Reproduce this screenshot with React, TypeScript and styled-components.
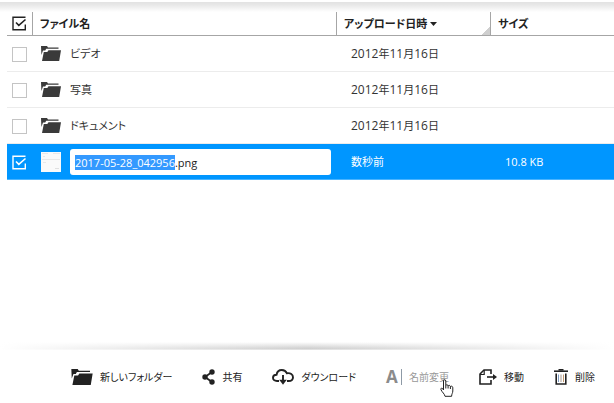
import { useEffect, useRef, useState } from "react";
import type { ReactNode } from "react";
import styled, { createGlobalStyle } from "styled-components";

const GlobalStyle = createGlobalStyle`
  *, *::before, *::after { box-sizing: border-box; }
  body {
    margin: 0;
    background: #fff;
    color: #333;
    font: 11px/16px "Open Sans", "Noto Sans CJK JP", sans-serif;
    font-feature-settings: "palt";
  }
`;

const Page = styled.div`
  min-height: 100vh;
  display: flex;
  flex-direction: column;
`;

const TopShade = styled.div`
  height: 10px;
  margin-top: 2px;
  background: linear-gradient(#e2e2e2, #e8e8e8 30%, #fff);
`;

const Main = styled.main`
  flex: 1;
  padding-left: 7px;
`;

const FileTable = styled.table`
  width: 100%;
  table-layout: fixed;
  border-collapse: separate;
  border-spacing: 0;
`;

const HeadCell = styled.th<{ $width?: number; $divider?: boolean; $resizable?: boolean }>`
  width: ${(p) => (p.$width ? `${p.$width}px` : "auto")};
  height: 24px;
  padding: 0 0 0 ${(p) => (p.$divider ? 7 : 5)}px;
  border-bottom: 1px solid #a6a6a6;
  border-left: ${(p) => (p.$divider ? "1px solid #a6a6a6" : "none")};
  background: ${(p) =>
    p.$resizable
      ? "linear-gradient(135deg, transparent 50%, #cfcfcf 50%) right bottom / 8px 8px no-repeat"
      : "none"};
  text-align: left;
  vertical-align: middle;
  font-weight: 600;
  color: #222;
  white-space: nowrap;
`;

const SortButton = styled.button`
  display: flex;
  align-items: center;
  gap: 3px;
  padding: 0;
  border: 0;
  background: none;
  color: inherit;
  font: inherit;
  font-feature-settings: inherit;
`;

const Row = styled.tr<{ $selected: boolean }>`
  height: 36px;
  background: ${(p) => (p.$selected ? "#0096ff" : "#fff")};
  color: ${(p) => (p.$selected ? "#fff" : "#333")};
  td { border-bottom: 1px solid ${(p) => (p.$selected ? "#4ab4ff" : "#ececec")}; }
`;

const Cell = styled.td<{ $indent: number }>`
  height: 36px;
  padding: 0 0 0 ${(p) => p.$indent}px;
  vertical-align: middle;
  white-space: nowrap;
`;

const CheckCell = styled(Cell)`
  padding-top: 2px;
`;

const SizeCell = styled(Cell)`
  font-weight: 500;
`;

const Digits = styled.span`
  font-size: 12px;
`;

const NameLayout = styled.div`
  display: flex;
  align-items: center;
  gap: 9px;
  padding-right: 5px;
`;

const CheckLabel = styled.label`
  position: relative;
  display: block;
  width: 15px;
  height: 15px;
  svg { display: block; }
`;

const CheckInput = styled.input`
  position: absolute;
  inset: 0;
  width: 100%;
  height: 100%;
  margin: 0;
  opacity: 0;
`;

const RenameInput = styled.input`
  flex: 1;
  min-width: 0;
  height: 26px;
  padding: 2px 5px 0;
  border: 0;
  border-radius: 3px;
  outline: 0;
  background: #fff;
  color: #222;
  font: inherit;
  font-weight: 500;
  &::selection { background: #3399ff; color: #fff; }
`;

const FooterShade = styled.div`
  height: 8px;
  background:
    linear-gradient(90deg, #fff, rgba(255, 255, 255, 0) 50%, #fff),
    linear-gradient(#fff, #cfcfcf 80%, #e8e8e8);
`;

const Toolbar = styled.footer`
  display: flex;
  justify-content: flex-end;
  align-items: center;
  gap: 30px;
  height: 53px;
  padding-right: 19px;
`;

const ToolButton = styled.button<{ $muted?: boolean }>`
  position: relative;
  display: flex;
  align-items: center;
  gap: 7px;
  padding: 0;
  border: 0;
  background: none;
  color: ${(p) => (p.$muted ? "#999" : "#222")};
  font: inherit;
  font-size: 10px;
  font-feature-settings: inherit;
  white-space: nowrap;
  svg { flex: none; }
`;

const Pointer = styled.svg`
  position: absolute;
  right: -5px;
  top: 10px;
`;

function CheckBox({ label, initial, color }: { label: string; initial: boolean; color: string }) {
  const [checked, setChecked] = useState(initial);
  return (
    <CheckLabel>
      <CheckInput
        type="checkbox"
        aria-label={label}
        checked={checked}
        onChange={(e) => setChecked(e.target.checked)}
      />
      {checked ? (
        <svg width="15" height="15" viewBox="0 0 15 15" fill="none" stroke={color} strokeWidth="1.4">
          <path d="M13.5 1.2H1V13.8H13.3V8.5" />
          <path d="M4 6.5L6.8 9.3L13.5 3.5" strokeWidth="1.6" />
        </svg>
      ) : (
        <svg width="15" height="15" viewBox="0 0 15 15" fill="#fff" stroke="#c4c4c4">
          <rect x="0.5" y="0.5" width="14" height="14" />
        </svg>
      )}
    </CheckLabel>
  );
}

function FolderIcon({ width, height, color }: { width: number; height: number; color: string }) {
  return (
    <svg width={width} height={height} viewBox="0 0 20 15" fill={color}>
      <path d="M0 0H6L7 1.6H17.5V2.8H5.2L4.2 4.6H2L0.4 9Z" />
      <path d="M7.5 4.2H20L18.2 15H1L2.8 6H6.3Z" />
    </svg>
  );
}

function Thumbnail() {
  return (
    <svg width="20" height="20" viewBox="0 0 20 20">
      <rect width="20" height="20" fill="#fafafa" />
      <path d="M1 1.5H7M12 1.5H19M2 4.5H4M1 7.5H19M2 10.5H5" stroke="#e8e8e8" />
      <path d="M14 16.5H18" stroke="#e0e0e0" />
    </svg>
  );
}

function ShareIcon() {
  return (
    <svg width="13" height="16" viewBox="0 0 13 16" fill="#222">
      <path d="M10 3L3 8L10 13" fill="none" stroke="#222" strokeWidth="1.8" />
      <circle cx="10" cy="3" r="2.7" />
      <circle cx="3" cy="8" r="2.7" />
      <circle cx="10" cy="13" r="2.7" />
    </svg>
  );
}

function CloudIcon() {
  return (
    <svg width="22" height="16" viewBox="0 0 22 16" fill="none" stroke="#222" strokeWidth="1.9">
      <path d="M7 12H5C2.5 12 1 10.7 1 8.8C1 6.8 2.5 5.8 4.6 5.7C5 2.8 7 1 9.8 1C12.3 1 14 2.2 14.8 4.2C18.5 3.6 21 5.4 21 8.2C21 10.6 19.2 12 16.5 12H15" />
      <path d="M11 6V12" />
      <path d="M7.2 10.8H14.8L11 15.8Z" fill="#222" stroke="none" />
    </svg>
  );
}

const RenameGlyph = styled.span`
  display: flex;
  align-items: center;
  width: 16px;
  height: 16px;
  border-right: 1px solid #8e9aa6;
  color: #8b8b8b;
  font: 700 17px/16px "Open Sans", sans-serif;
`;

function MoveIcon() {
  return (
    <svg width="18" height="16" viewBox="0 0 18 16" fill="none" stroke="#222" strokeWidth="1.6">
      <path d="M12 5V1H5L1 5V15H12V11" />
      <path d="M1 5.5H5.2V1" strokeWidth="1.2" />
      <path d="M8 8H15" />
      <path d="M14 5L18 8L14 11Z" fill="#222" stroke="none" />
    </svg>
  );
}

function TrashIcon() {
  return (
    <svg width="14" height="16" viewBox="0 0 14 16" fill="none" stroke="#222">
      <path d="M0 2.2H14" strokeWidth="1.6" />
      <path d="M4.5 0.8H9.5" strokeWidth="1.6" />
      <path d="M2.2 4.5V15H11.8V4.5" strokeWidth="1.6" />
      <path d="M4.5 5.5V13" stroke="#7f9cc0" />
      <path d="M7 5.5V13" stroke="#a89a90" />
      <path d="M9.5 5.5V13" stroke="#c39a72" />
    </svg>
  );
}

function HandPointer() {
  return (
    <Pointer width="14" height="18" viewBox="0 0 14 18" fill="#fff" stroke="#222" strokeLinejoin="round">
      <path d="M3.5 11V2C3.5 .3 5.8 .3 5.8 2V6.5C6.2 5.3 8 5.5 8.1 7C8.6 5.9 10.2 6.2 10.4 7.6C11.2 6.7 12.8 7.2 12.8 8.7V12C12.8 14 11.6 15 11.6 17.3H5C4.6 14.8 2.2 13.3 1 10.8C.3 9.2 2 8.5 2.8 9.8Z" />
      <path d="M5.8 6.5V9.5M8.1 7V9.5M10.4 7.6V10" />
    </Pointer>
  );
}

function DateText({ value }: { value: string }) {
  return value
    .split(/(\d+)/)
    .filter(Boolean)
    .map((part, i) => (/\d/.test(part) ? <Digits key={i}>{part}</Digits> : part));
}

function RenameField({ label, initial }: { label: string; initial: string }) {
  const field = useRef<HTMLInputElement>(null);
  const [value, setValue] = useState(initial);
  useEffect(() => {
    field.current?.focus();
    field.current?.setSelectionRange(0, initial.lastIndexOf("."));
  }, [initial]);
  return (
    <RenameInput
      ref={field}
      type="text"
      aria-label={label}
      spellCheck={false}
      value={value}
      onChange={(e) => setValue(e.target.value)}
    />
  );
}

type FileItem = { name: string; date: string; size: string; editing: boolean };

const files: FileItem[] = [
  { name: "ビデオ", date: "2012年11月16日", size: "", editing: false },
  { name: "写真", date: "2012年11月16日", size: "", editing: false },
  { name: "ドキュメント", date: "2012年11月16日", size: "", editing: false },
  { name: "2017-05-28_042956.png", date: "数秒前", size: "10.8 KB", editing: true },
];

type Tool = { label: string; icon: ReactNode; active?: boolean };

const tools: Tool[] = [
  { label: "新しいフォルダー", icon: <FolderIcon width={22} height={16} color="#222" /> },
  { label: "共有", icon: <ShareIcon /> },
  { label: "ダウンロード", icon: <CloudIcon /> },
  { label: "名前変更", icon: <RenameGlyph aria-hidden="true">A</RenameGlyph>, active: true },
  { label: "移動", icon: <MoveIcon /> },
  { label: "削除", icon: <TrashIcon /> },
];

export default function App() {
  return (
    <Page>
      <GlobalStyle />
      <TopShade />
      <Main>
        <FileTable>
          <thead>
            <tr>
              <HeadCell $width={25}>
                <CheckBox label="すべて選択" initial color="#222" />
              </HeadCell>
              <HeadCell $divider>ファイル名</HeadCell>
              <HeadCell $divider $resizable $width={154} aria-sort="descending">
                <SortButton type="button">
                  アップロード日時
                  <svg width="7" height="4" viewBox="0 0 7 4" fill="#222">
                    <path d="M0 0H7L3.5 4Z" />
                  </svg>
                </SortButton>
              </HeadCell>
              <HeadCell $divider $width={124}>サイズ</HeadCell>
            </tr>
          </thead>
          <tbody>
            {files.map((file) => (
              <Row key={file.name} $selected={file.editing}>
                <CheckCell $indent={5}>
                  <CheckBox label={file.name} initial={file.editing} color="#fff" />
                </CheckCell>
                <Cell $indent={9}>
                  <NameLayout>
                    {file.editing ? <Thumbnail /> : <FolderIcon width={20} height={15} color="#3a3a3a" />}
                    {file.editing ? (
                      <RenameField label="ファイル名" initial={file.name} />
                    ) : (
                      <span>{file.name}</span>
                    )}
                  </NameLayout>
                </Cell>
                <Cell $indent={15}>
                  <DateText value={file.date} />
                </Cell>
                <SizeCell $indent={15}>{file.size}</SizeCell>
              </Row>
            ))}
          </tbody>
        </FileTable>
      </Main>
      <FooterShade />
      <Toolbar>
        {tools.map((tool) => (
          <ToolButton key={tool.label} type="button" $muted={tool.active}>
            {tool.icon}
            {tool.label}
            {tool.active && <HandPointer />}
          </ToolButton>
        ))}
      </Toolbar>
    </Page>
  );
}
